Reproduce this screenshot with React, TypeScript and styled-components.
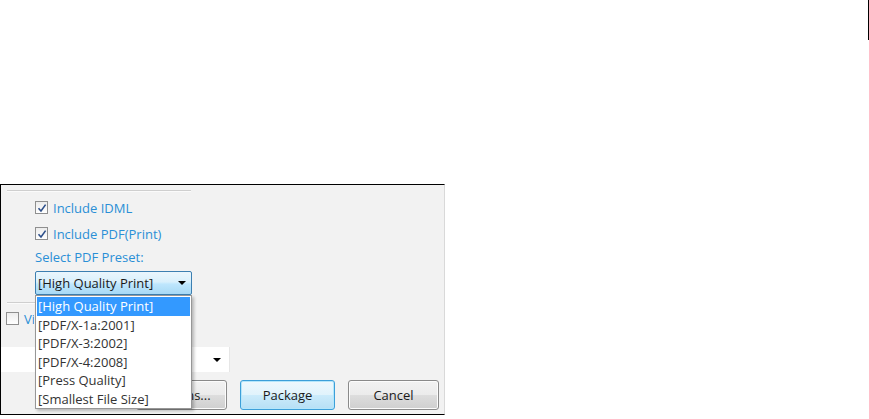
import React, { useState } from 'react';
import styled, { createGlobalStyle } from 'styled-components';

const GlobalStyle = createGlobalStyle`
    html, body {
        margin: 0;
        padding: 0;
        background: #ffffff;
    }
    body {
        font-family: "Open Sans", "Noto Sans", sans-serif;
        font-size: 13px;
        color: #333333;
    }
`;

const Page = styled.div`
    width: 869px;
    height: 419px;
    display: flex;
    flex-direction: column;
    overflow: hidden;
`;

const WindowEdge = styled.div`
    height: 40px;
    border-right: 1px solid #000000;
    box-sizing: border-box;
    width: 869px;
    flex-shrink: 0;
`;

const Gap = styled.div`
    height: 144px;
    flex-shrink: 0;
`;

const Dialog = styled.div`
    width: 445px;
    height: 231px;
    box-sizing: border-box;
    background: #f2f2f2;
    border-top: 1px solid #000000;
    border-left: 1px solid #000000;
    border-bottom: 1px solid #000000;
    border-right: 1px solid #d9d9d9;
    display: flex;
    flex-direction: column;
    padding-top: 5px;
`;

const Separator = styled.div<{ $width: number }>`
    margin-left: 6px;
    width: ${(p) => p.$width}px;
    height: 1px;
    background: #cfcfcf;
    border-bottom: 1px solid #fbfbfb;
    flex-shrink: 0;
`;

const OptionsGroup = styled.div`
    display: flex;
    flex-direction: column;
    padding-left: 34px;
    padding-top: 8px;
`;

const CheckRow = styled.label`
    display: flex;
    align-items: center;
    gap: 5px;
    height: 15px;
    margin-bottom: 11px;
    color: #2a8fd6;
    font-size: 13px;
    white-space: nowrap;
    cursor: default;
`;

const Box = styled.span`
    width: 11px;
    height: 11px;
    border: 1px solid #8f8f8f;
    background: linear-gradient(#ececec, #ffffff);
    display: flex;
    align-items: center;
    justify-content: center;
    flex-shrink: 0;
`;

const FieldLabel = styled.div`
    color: #2a8fd6;
    font-size: 13px;
    height: 16px;
    line-height: 16px;
    margin-top: -3px;
    margin-bottom: 6px;
`;

const SelectWrap = styled.div`
    position: relative;
    width: 157px;
`;

const PresetButton = styled.div`
    height: 24px;
    box-sizing: border-box;
    border: 1px solid #3c7fb1;
    border-radius: 2px;
    background: linear-gradient(#eaf6fd 0%, #d9f0fc 45%, #bee6fd 55%, #a7d9f5 100%);
    display: flex;
    align-items: center;
    justify-content: space-between;
    padding: 0 5px 0 2px;
    font-size: 13px;
    color: #1a1a1a;
    white-space: nowrap;
`;

const Arrow = styled.span`
    width: 0;
    height: 0;
    border-left: 4px solid transparent;
    border-right: 4px solid transparent;
    border-top: 4px solid #000000;
`;

const Popup = styled.ul`
    position: absolute;
    left: 0;
    top: 24px;
    width: 157px;
    margin: 0;
    padding: 1px 1px 0;
    list-style: none;
    background: #ffffff;
    border: 1px solid #979797;
    box-shadow: 2px 2px 3px rgba(0, 0, 0, 0.25);
    z-index: 5;
    box-sizing: border-box;
`;

const PopupItem = styled.li<{ $active?: boolean }>`
    height: 18.5px;
    line-height: 18px;
    padding-left: 1px;
    font-size: 13px;
    white-space: nowrap;
    background: ${(p) => (p.$active ? '#3399ff' : 'transparent')};
    color: ${(p) => (p.$active ? '#ffffff' : '#333333')};
`;

const LowerGroup = styled.div`
    display: flex;
    flex-direction: column;
    padding-top: 7px;
`;

const ViewRow = styled(CheckRow)`
    margin-top: 7px;
    padding-left: 5px;
    margin-bottom: 0;
    width: 28px;
    overflow: hidden;
`;

const WideSelect = styled.div`
    margin-top: 21px;
    width: 229px;
    height: 25px;
    background: #ffffff;
    border-right: 1px solid #e6e6e6;
    display: flex;
    align-items: center;
    justify-content: flex-end;
    padding-right: 8px;
    box-sizing: border-box;
`;

const ButtonRow = styled.div`
    display: flex;
    margin-top: 8px;
    gap: 13px;
    padding-right: 5px;
    justify-content: flex-end;
`;

const Button = styled.button<{ $primary?: boolean }>`
    width: ${(p) => (p.$primary ? '95px' : '91px')};
    height: 30px;
    font-family: "Open Sans", "Noto Sans", sans-serif;
    font-size: 13px;
    color: #1a1a1a;
    border-radius: 3px;
    border: 1px solid ${(p) => (p.$primary ? '#3c9fd9' : '#8a8a8a')};
    box-shadow: inset 0 0 0 1px ${(p) => (p.$primary ? '#b4e6fb' : '#fcfcfc')};
    background: ${(p) =>
        p.$primary
            ? 'linear-gradient(#eef8fd 0%, #e0f3fc 50%, #cbebfb 51%, #b6dff5 100%)'
            : 'linear-gradient(#f2f2f2 0%, #ebebeb 50%, #dddddd 51%, #cfcfcf 100%)'};
    padding: 0;
    white-space: nowrap;
    overflow: hidden;
`;

const Check = () => (
    <svg width="10" height="10" viewBox="0 0 10 10">
        <path d="M1.5 5.2 L4 8 L8.6 1.6" fill="none" stroke="#2d4f8a" strokeWidth="1.6" />
    </svg>
);

const presets = [
    '[High Quality Print]',
    '[PDF/X-1a:2001]',
    '[PDF/X-3:2002]',
    '[PDF/X-4:2008]',
    '[Press Quality]',
    '[Smallest File Size]',
];

const App: React.FC = () => {
    const [selected] = useState(0);

    return (
        <Page>
            <GlobalStyle />
            <WindowEdge />
            <Gap />
            <Dialog>
                <Separator $width={184} />
                <OptionsGroup>
                    <CheckRow>
                        <Box><Check /></Box>
                        Include IDML
                    </CheckRow>
                    <CheckRow>
                        <Box><Check /></Box>
                        Include PDF(Print)
                    </CheckRow>
                    <FieldLabel>Select PDF Preset:</FieldLabel>
                    <SelectWrap>
                        <PresetButton>
                            {presets[selected]}
                            <Arrow />
                        </PresetButton>
                        <Popup>
                            {presets.map((p, i) => (
                                <PopupItem key={p} $active={i === selected}>{p}</PopupItem>
                            ))}
                        </Popup>
                    </SelectWrap>
                </OptionsGroup>
                <LowerGroup>
                    <Separator $width={184} />
                    <ViewRow>
                        <Box />
                        View Report
                    </ViewRow>
                    <WideSelect>
                        <Arrow />
                    </WideSelect>
                    <ButtonRow>
                        <Button>Options...</Button>
                        <Button $primary>Package</Button>
                        <Button>Cancel</Button>
                    </ButtonRow>
                </LowerGroup>
            </Dialog>
        </Page>
    );
};

export default App;
